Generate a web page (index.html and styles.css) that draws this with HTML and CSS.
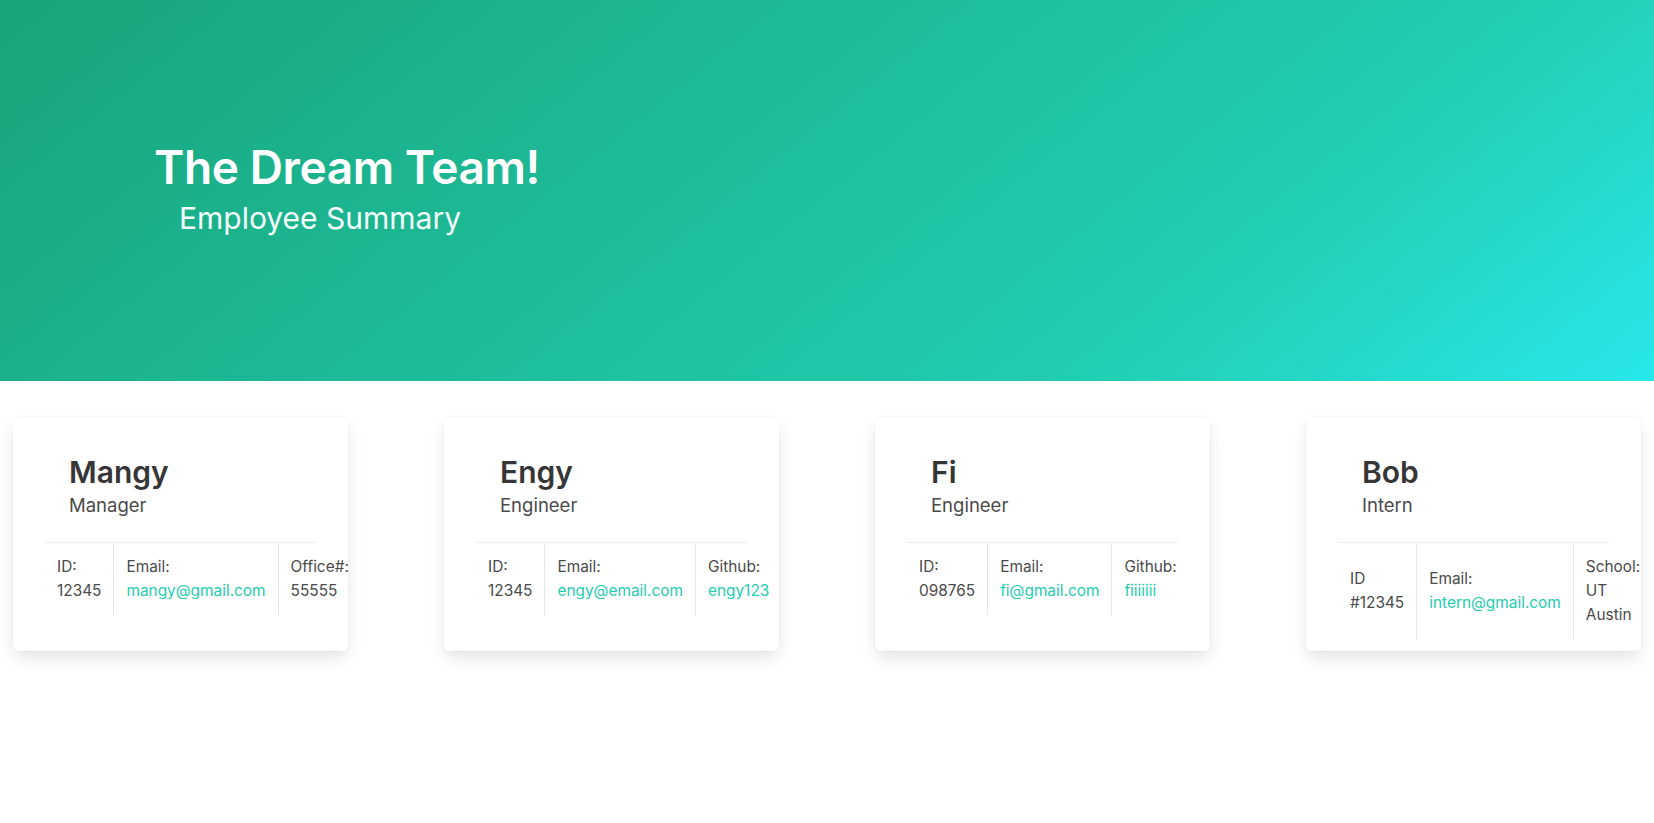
FILE: index.html
```html
<!DOCTYPE html>
<html lang="en">
<head>
<meta charset="utf-8">
<title>The Dream Team!</title>
<link rel="stylesheet" href="styles.css">
</head>
<body>
<section class="hero">
  <div class="hero-body">
    <h1 class="title">The Dream Team!</h1>
    <h2 class="subtitle">Employee Summary</h2>
  </div>
</section>
<main class="cards">
  <div class="card">
    <div class="card-head">
      <p class="name">Mangy</p>
      <p class="role">Manager</p>
    </div>
    <div class="divider"></div>
    <table class="info">
      <tr>
        <td>ID:<br>12345</td>
        <td>Email:<br><a href="#">mangy@gmail.com</a></td>
        <td>Office#:<br>55555</td>
      </tr>
    </table>
  </div>
  <div class="card">
    <div class="card-head">
      <p class="name">Engy</p>
      <p class="role">Engineer</p>
    </div>
    <div class="divider"></div>
    <table class="info">
      <tr>
        <td>ID:<br>12345</td>
        <td>Email:<br><a href="#">engy@email.com</a></td>
        <td>Github:<br><a href="#">engy123</a></td>
      </tr>
    </table>
  </div>
  <div class="card">
    <div class="card-head">
      <p class="name">Fi</p>
      <p class="role">Engineer</p>
    </div>
    <div class="divider"></div>
    <table class="info">
      <tr>
        <td>ID:<br>098765</td>
        <td>Email:<br><a href="#">fi@gmail.com</a></td>
        <td>Github:<br><a href="#">fiiiiiii</a></td>
      </tr>
    </table>
  </div>
  <div class="card">
    <div class="card-head">
      <p class="name">Bob</p>
      <p class="role">Intern</p>
    </div>
    <div class="divider"></div>
    <table class="info">
      <tr>
        <td>ID<br>#12345</td>
        <td>Email:<br><a href="#">intern@gmail.com</a></td>
        <td>School:<br>UT<br>Austin</td>
      </tr>
    </table>
  </div>
</main>
</body>
</html>
```

FILE: styles.css
```css
* { box-sizing: border-box; }
html, body { margin: 0; padding: 0; }
body {
  font-family: Inter, "Noto Sans", "Liberation Sans", sans-serif;
  color: #4a4a4a;
  background: #fff;
}
p, h1, h2 { margin: 0; }

.hero {
  height: 381px;
  background-image: linear-gradient(141deg, #18a57a 0%, #21ccae 71%, #28e7e9 100%);
  color: #fff;
}
.hero-body {
  padding: 140px 0 0 154px;
}
.title {
  font-size: 46px;
  line-height: 54px;
  font-weight: 600;
  letter-spacing: -0.4px;
  color: #fff;
}
.subtitle {
  font-size: 30px;
  line-height: 36px;
  font-weight: 400;
  margin: 6px 0 0 25px;
  color: #f4fffc;
}

.cards {
  display: flex;
  justify-content: space-between;
  align-items: stretch;
  padding: 36px 13px;
}
.card {
  width: 335px;
  background: #fff;
  border-radius: 6px;
  overflow: hidden;
  padding-bottom: 12px;
  box-shadow: 0 8px 18px -2px rgba(10, 10, 10, 0.12), 0 0 0 1px rgba(10, 10, 10, 0.02);
}
.card-head {
  padding: 37px 0 0 56px;
}
.name {
  font-size: 30px;
  line-height: 36px;
  font-weight: 600;
  color: #363636;
}
.role {
  font-size: 18.5px;
  line-height: 24px;
  margin-top: 3px;
  color: #4a4a4a;
}
.divider {
  height: 1px;
  background: #ededed;
  margin: 25px 32px 0;
}
.info {
  border-collapse: collapse;
  margin-left: 32px;
  font-size: 15.4px;
  line-height: 24px;
}
.info td {
  padding: 12px;
  vertical-align: middle;
  white-space: nowrap;
}
.info td + td {
  border-left: 1px solid #e6e6e6;
}
.info a {
  color: #24cdae;
  text-decoration: none;
}
```
